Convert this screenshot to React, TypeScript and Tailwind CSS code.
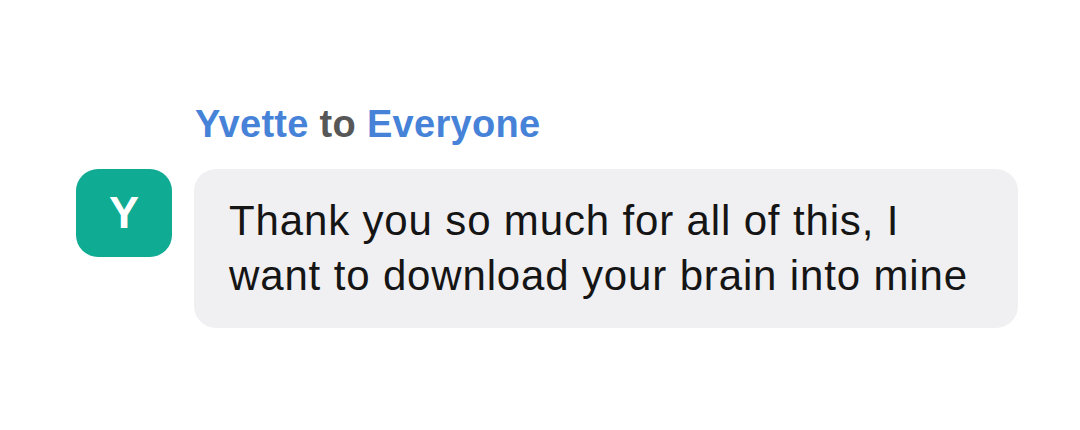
import React from 'react';

const App = () => {
  return (
    <div className="w-[1080px] h-[430px] bg-white font-['Liberation_Sans',Arial,sans-serif]">
      <div className="pt-[102px] pl-[76px]">
        <div className="pl-[119px] text-[38px] font-bold leading-[44px] tracking-[0.3px]">
          <span className="text-[#4683d8]">Yvette</span>
          <span className="text-[#575757]"> to </span>
          <span className="text-[#4683d8]">Everyone</span>
        </div>
        <div className="flex items-start gap-[22px] mt-[23px]">
          <div className="w-[96px] h-[88px] rounded-[22px] bg-[#10ab93] flex items-center justify-center text-white text-[45px] font-bold">
            Y
          </div>
          <div className="w-[824px] rounded-[22px] bg-[#f0f0f2] pl-[35px] pr-[30px] pt-[24px] pb-[25px] text-[42px] leading-[55px] tracking-[0.85px] text-[#151515]">
            Thank you so much for all of this, I want to download your brain into mine
          </div>
        </div>
      </div>
    </div>
  );
};

export default App;
